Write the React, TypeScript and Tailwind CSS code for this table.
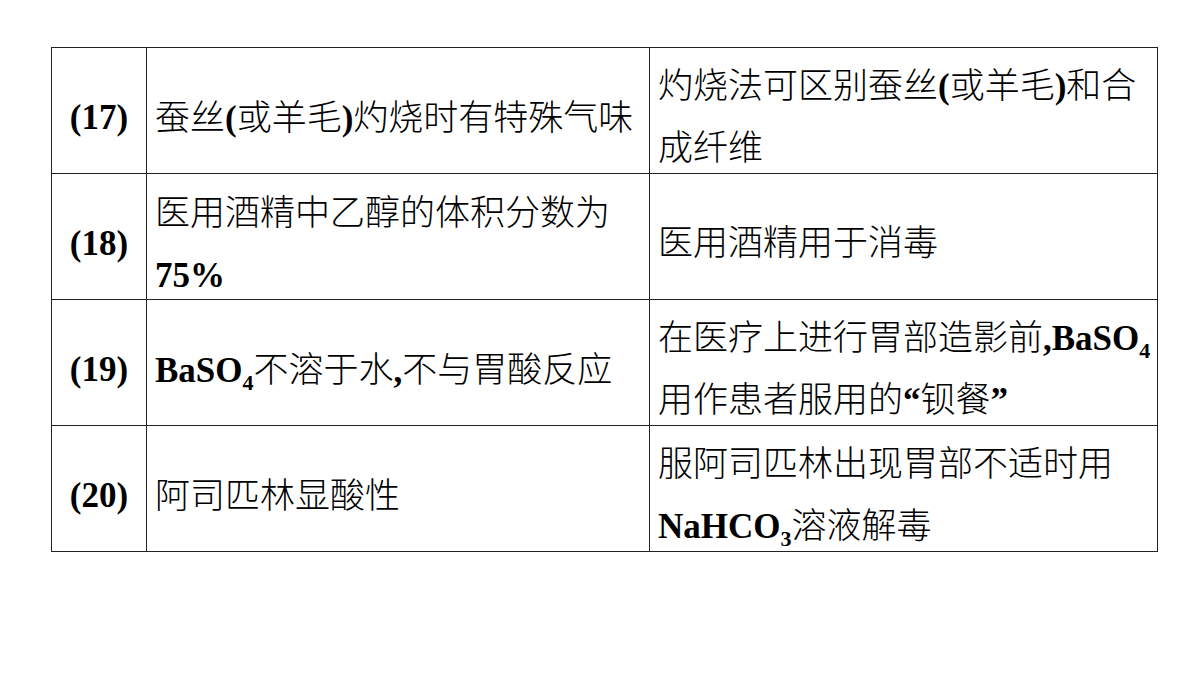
import React from "react";

const B = ({ children }: { children: React.ReactNode }) => (
  <span className="font-['Liberation_Serif',serif] font-bold leading-none">{children}</span>
);

const Sub = ({ children }: { children: React.ReactNode }) => (
  <span className="relative top-[8px] font-['Liberation_Serif',serif] font-bold text-[22px] leading-none">
    {children}
  </span>
);

type Row = { no: string; left: React.ReactNode; right: React.ReactNode };

const rows: Row[] = [
  {
    no: "(17)",
    left: (
      <>
        蚕丝<B>(</B>或羊毛<B>)</B>灼烧时有特殊气味
      </>
    ),
    right: (
      <>
        灼烧法可区别蚕丝<B>(</B>或羊毛<B>)</B>和合
        <br />
        成纤维
      </>
    ),
  },
  {
    no: "(18)",
    left: (
      <>
        医用酒精中乙醇的体积分数为
        <br />
        <B>75%</B>
      </>
    ),
    right: <>医用酒精用于消毒</>,
  },
  {
    no: "(19)",
    left: (
      <>
        <B>BaSO</B>
        <Sub>4</Sub>不溶于水<B>,</B>不与胃酸反应
      </>
    ),
    right: (
      <>
        在医疗上进行胃部造影前<B>,BaSO</B>
        <Sub>4</Sub>
        <br />
        用作患者服用的<B>“</B>钡餐<B>”</B>
      </>
    ),
  },
  {
    no: "(20)",
    left: <>阿司匹林显酸性</>,
    right: (
      <>
        服阿司匹林出现胃部不适时用
        <br />
        <B>NaHCO</B>
        <Sub>3</Sub>溶液解毒
      </>
    ),
  },
];

const cell = "border border-[#222] p-0 align-middle";

export default function App() {
  return (
    <div className="w-[1200px] h-[675px] bg-white overflow-hidden pt-[47px] pl-[51px]">
      <table className="border-collapse text-black font-['Noto_Sans_CJK_SC',sans-serif] font-light text-[35px]">
        <tbody>
          {rows.map((r) => (
            <tr key={r.no}>
              <td className={`w-[95px] ${cell}`}>
                <div className="h-[125px] flex items-center justify-center pt-[14px]">
                  <B>{r.no}</B>
                </div>
              </td>
              <td className={`w-[503px] ${cell}`}>
                <div className="h-[125px] flex items-center pl-[8px] pt-[9px] overflow-hidden">
                  <div className="leading-[62px] whitespace-nowrap">{r.left}</div>
                </div>
              </td>
              <td className={`w-[508px] ${cell}`}>
                <div className="h-[125px] flex items-center pl-[8px] pt-[6px] overflow-hidden">
                  <div className="leading-[62px] whitespace-nowrap">{r.right}</div>
                </div>
              </td>
            </tr>
          ))}
        </tbody>
      </table>
    </div>
  );
}
